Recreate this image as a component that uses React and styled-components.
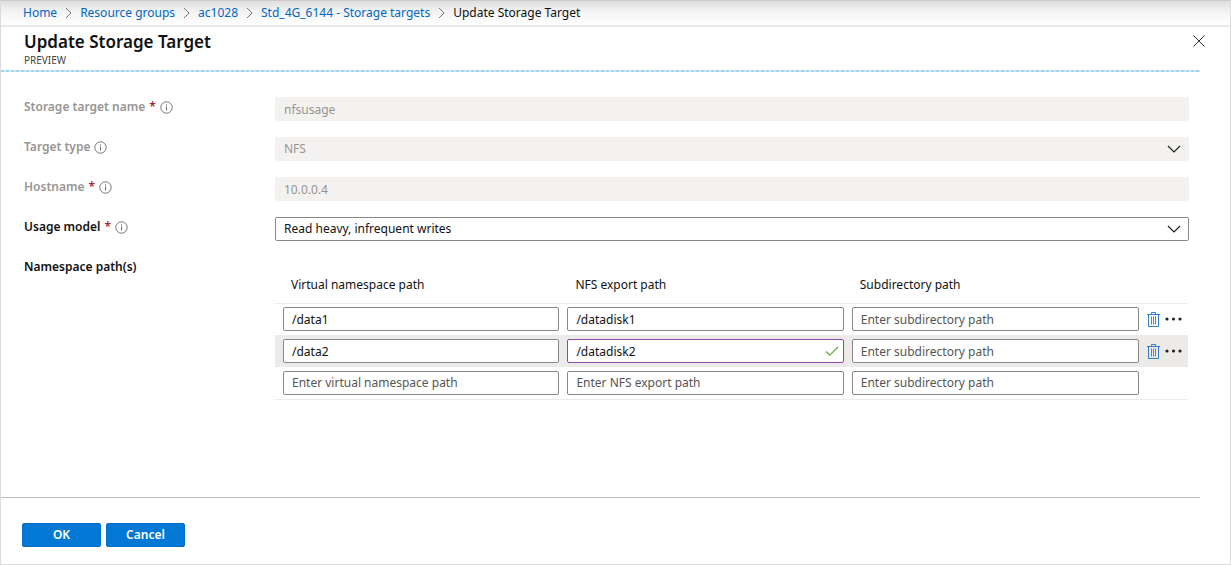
import React from "react";
import styled, { createGlobalStyle, css } from "styled-components";

const GlobalStyle = createGlobalStyle`
  *, *::before, *::after { box-sizing: border-box; }
  body {
    margin: 0;
    background: #fff;
    color: #111;
    font: 12px/18px "Noto Sans", "Open Sans", sans-serif;
  }
  button, input, select { font: inherit; color: inherit; }
`;

const Shell = styled.div`
  display: flex;
  flex-direction: column;
  min-height: 100vh;
  border: 1px solid #dcdcdc;
  border-top-color: #ccc;
`;

const Breadcrumbs = styled.nav`
  border-bottom: 2px solid #e8e8e8;
  background: linear-gradient(#dedede, #f2f2f2 40%, #fff);

  ol {
    display: flex;
    align-items: center;
    height: 24px;
    margin: 0;
    padding: 0 22px;
    list-style: none;
  }
  li { display: flex; align-items: center; white-space: nowrap; }
  a { color: #0067c5; text-decoration: none; }
`;

const CrumbArrow = styled.svg`
  width: 7px;
  height: 12px;
  margin: 0 8px;
  fill: none;
  stroke: #777;
`;

const Blade = styled.main`
  flex: 1;
  display: flex;
  flex-direction: column;
  margin-right: 30px;
`;

const BladeHeader = styled.header`
  display: flex;
  justify-content: space-between;
  align-items: flex-start;
  height: 45px;
  padding: 3px 0 0 23px;
  background: repeating-linear-gradient(90deg, #9bd7f3 0 3px, #d3e6ef 3px 5px) bottom / 100% 2px no-repeat;
`;

const Title = styled.h1`
  margin: 0;
  font-size: 17px;
  font-weight: 600;
  line-height: 24px;
`;

const Subtitle = styled.p`
  margin: 0;
  color: #444;
  font-size: 10px;
  line-height: 12px;
`;

const CloseButton = styled.button`
  display: flex;
  margin-right: -10px;
  padding: 4px;
  border: 0;
  background: none;

  svg { width: 14px; height: 14px; stroke: #333; }
`;

const Form = styled.form`
  flex: 1;
  display: flex;
  flex-direction: column;
`;

const Fields = styled.div`
  display: flex;
  flex-direction: column;
  gap: 16px;
  padding: 25px 11px 24px 23px;
`;

const FieldRow = styled.div`
  display: grid;
  grid-template-columns: 251px 1fr;
`;

const LabelCell = styled.div`
  display: flex;
  align-items: center;
  height: 20px;
  gap: 4px;
  font-weight: 600;
  color: ${(p) => (p.$muted ? "#979593" : "#111")};
`;

const Required = styled.span`
  color: #a4262c;
`;

const InfoIcon = styled.svg`
  width: 13px;
  height: 13px;
  fill: none;
  stroke: #666;
`;

const box = css`
  display: block;
  width: 100%;
  height: 24px;
  padding: 0 8px;
  border: 1px solid ${(p) => (p.$valid ? "#8a4bab" : "#8a8886")};
  border-radius: 2px;
  background: #fff;
  outline: 0;

  &:disabled {
    border-color: #f3f2f1;
    background: #f3f2f1;
    color: #979593;
    opacity: 1;
  }
  &::placeholder { color: #555; opacity: 1; }
`;

const TextInput = styled.input`${box}`;

const Select = styled.select`
  ${box}
  appearance: none;
`;

const Control = styled.div`
  position: relative;
`;

const Adornment = styled.svg`
  position: absolute;
  top: 6px;
  right: ${(p) => (p.$check ? 5 : 8)}px;
  width: 14px;
  height: 12px;
  fill: none;
  stroke: ${(p) => (p.$check ? "#5fae45" : "#222")};
  pointer-events: none;
`;

const PathTable = styled.table`
  width: calc(100% - 1px);
  table-layout: fixed;
  border-collapse: collapse;

  th {
    height: 46px;
    padding: 10px 0 0 16px;
    font-weight: 400;
    text-align: left;
  }
  th.path { width: 31.15%; }
  th.actions { width: 49px; }
  td { height: 32px; padding: 0 0 0 8px; }
  thead, tbody { border-bottom: 1px solid #edebe9; }
`;

const PathRow = styled.tr`
  background: ${(p) => (p.$active ? "#edebe9" : "transparent")};
`;

const Actions = styled.div`
  display: flex;
  align-items: center;
  gap: 5px;

  button {
    display: flex;
    padding: 0;
    border: 0;
    background: none;
  }
`;

const Footer = styled.footer`
  display: flex;
  gap: 5px;
  margin-top: auto;
  padding: 25px 21px 17px;
  border-top: 1px solid #b9b9b9;
`;

const ActionButton = styled.button`
  width: 79px;
  height: 24px;
  padding: 0;
  border: 1px solid #0070cf;
  border-radius: 2px;
  background: #0078d4;
  color: #fff;
  font-weight: 600;
`;

const crumbs = ["Home", "Resource groups", "ac1028", "Std_4G_6144 - Storage targets"];

const paths = [
  { ns: "/data1", nfs: "/datadisk1", saved: true },
  { ns: "/data2", nfs: "/datadisk2", saved: true, active: true },
  { ns: "", nfs: "" },
];

function Info() {
  return (
    <InfoIcon viewBox="0 0 13 13" aria-hidden="true">
      <circle cx="6.5" cy="6.5" r="5.7" strokeWidth="0.9" />
      <path d="M6.5 5.5v4M6.5 3.4v1.1" />
    </InfoIcon>
  );
}

function Chevron() {
  return (
    <Adornment viewBox="0 0 14 12" aria-hidden="true">
      <path d="M1 3l6 6 6-6" strokeWidth="1.2" />
    </Adornment>
  );
}

function Field({ id, label, required, info = true, muted, children }) {
  return (
    <FieldRow>
      <LabelCell $muted={muted}>
        <label htmlFor={id}>{label}</label>
        {required && <Required>*</Required>}
        {info && <Info />}
      </LabelCell>
      <Control>{children}</Control>
    </FieldRow>
  );
}

function RowActions() {
  return (
    <Actions>
      <button type="button" aria-label="Delete">
        <svg width="13" height="17" viewBox="0 0 13 17" fill="none" stroke="#2f7cd3">
          <path d="M0 3.5h13M4.5 3V1.5h4V3M1.5 3.5v12h10v-12" />
          <path d="M4.5 5.5v8M6.5 5.5v8M8.5 5.5v8" strokeWidth="0.9" />
        </svg>
      </button>
      <button type="button" aria-label="More">
        <svg width="17" height="4" viewBox="0 0 17 4" fill="#222">
          <circle cx="2" cy="2" r="1.6" />
          <circle cx="8.5" cy="2" r="1.6" />
          <circle cx="15" cy="2" r="1.6" />
        </svg>
      </button>
    </Actions>
  );
}

export default function App() {
  return (
    <Shell>
      <GlobalStyle />
      <Breadcrumbs aria-label="Breadcrumb">
        <ol>
          {crumbs.map((c) => (
            <li key={c}>
              <a href="#">{c}</a>
              <CrumbArrow viewBox="0 0 7 12" aria-hidden="true">
                <path d="M1 1l5 5-5 5" />
              </CrumbArrow>
            </li>
          ))}
          <li>Update Storage Target</li>
        </ol>
      </Breadcrumbs>
      <Blade>
        <BladeHeader>
          <div>
            <Title>Update Storage Target</Title>
            <Subtitle>PREVIEW</Subtitle>
          </div>
          <CloseButton type="button" aria-label="Close">
            <svg viewBox="0 0 14 14"><path d="M1.5 1.5l11 11M12.5 1.5l-11 11" /></svg>
          </CloseButton>
        </BladeHeader>
        <Form onSubmit={(e) => e.preventDefault()}>
          <Fields>
            <Field id="name" label="Storage target name" required muted>
              <TextInput id="name" defaultValue="nfsusage" disabled />
            </Field>
            <Field id="type" label="Target type" muted>
              <Select id="type" disabled><option>NFS</option></Select>
              <Chevron />
            </Field>
            <Field id="host" label="Hostname" required muted>
              <TextInput id="host" defaultValue="10.0.0.4" disabled />
            </Field>
            <Field id="usage" label="Usage model" required>
              <Select id="usage"><option>Read heavy, infrequent writes</option></Select>
              <Chevron />
            </Field>
            <Field id="ns-0" label="Namespace path(s)" info={false}>
              <PathTable>
                <thead>
                  <tr>
                    <th className="path">Virtual namespace path</th>
                    <th className="path">NFS export path</th>
                    <th>Subdirectory path</th>
                    <th className="actions" aria-label="Actions" />
                  </tr>
                </thead>
                <tbody>
                  {paths.map((p, i) => (
                    <PathRow key={i} $active={p.active}>
                      <td>
                        <TextInput id={`ns-${i}`} aria-label="Virtual namespace path" placeholder="Enter virtual namespace path" defaultValue={p.ns} />
                      </td>
                      <td>
                        <Control>
                          <TextInput aria-label="NFS export path" placeholder="Enter NFS export path" defaultValue={p.nfs} $valid={p.active} />
                          {p.active && (
                            <Adornment $check viewBox="0 0 14 12" aria-hidden="true">
                              <path d="M1 6.5l3.8 3.7L13 2" strokeWidth="1.2" />
                            </Adornment>
                          )}
                        </Control>
                      </td>
                      <td>
                        <TextInput aria-label="Subdirectory path" placeholder="Enter subdirectory path" />
                      </td>
                      <td>{p.saved && <RowActions />}</td>
                    </PathRow>
                  ))}
                </tbody>
              </PathTable>
            </Field>
          </Fields>
          <Footer>
            <ActionButton type="submit">OK</ActionButton>
            <ActionButton type="button">Cancel</ActionButton>
          </Footer>
        </Form>
      </Blade>
    </Shell>
  );
}
